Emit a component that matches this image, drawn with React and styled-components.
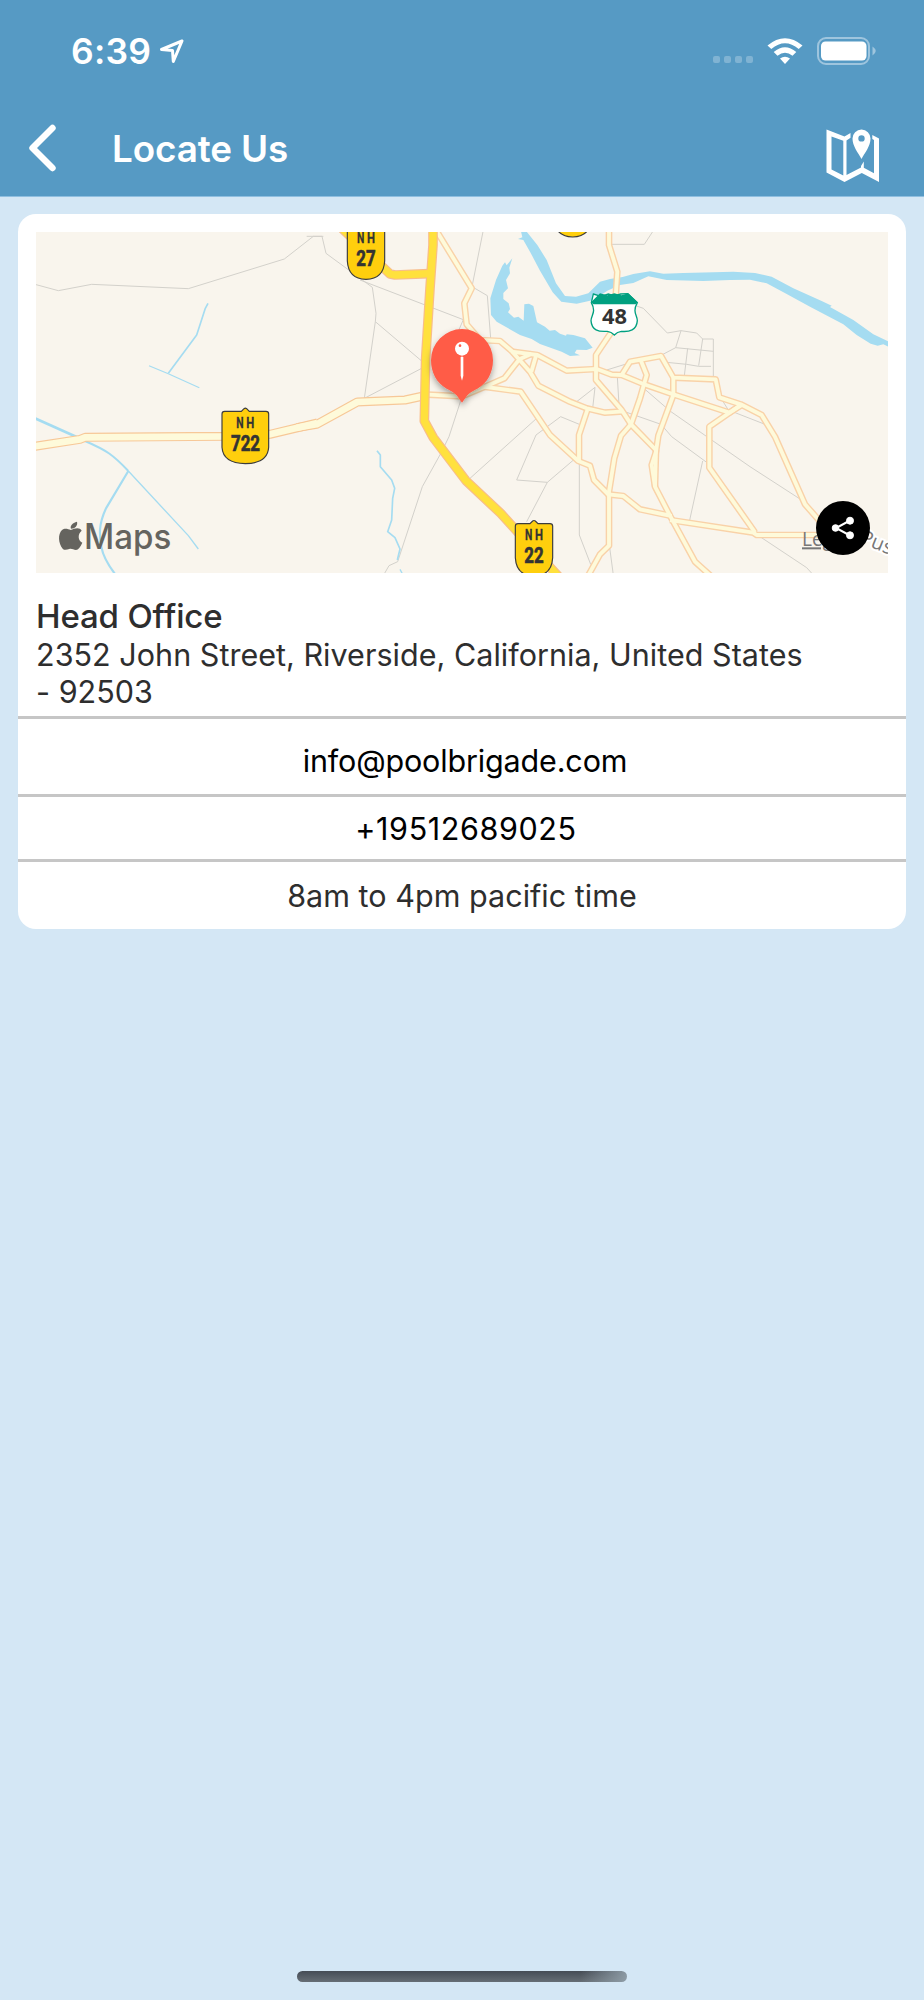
import React from 'react';
import styled, { createGlobalStyle } from 'styled-components';

const GlobalStyle = createGlobalStyle`
  * {
    box-sizing: border-box;
  }

  body {
    margin: 0;
    background: #d4e7f5;
    font-family: Inter, "Liberation Sans", sans-serif;
  }
`;

const Screen = styled.div`
  display: flex;
  flex-direction: column;
  width: 924px;
  height: 2000px;
  background: #d4e7f5;
`;

const Header = styled.header`
  height: 197px;
  background: #569ac4;
  border-bottom: 1px solid #8fbfe0;
  color: #fff;
`;

const StatusBar = styled.div`
  display: flex;
  align-items: center;
  height: 100px;
  padding: 2px 48px 0 71px;
`;

const Time = styled.span`
  font-size: 35.5px;
  font-weight: 600;
  letter-spacing: 0.2px;
  width: 88px;
`;

const StatusIcons = styled.div`
  display: flex;
  align-items: center;
  margin-left: auto;
`;

const Signal = styled.div`
  display: flex;
  gap: 4px;
  margin: 17px 14px 0 0;

  i {
    width: 7px;
    height: 7px;
    border-radius: 2px;
    background: rgba(255, 255, 255, 0.25);
  }
`;

const BatteryIcon = styled.svg`
  margin-left: 14px;
`;

const NavBar = styled.div`
  display: flex;
  align-items: center;
  height: 96px;
  padding: 0 44px 0 28px;
`;

const BackButton = styled.button`
  display: flex;
  width: 84px;
  padding: 0;
  border: none;
  background: none;
  cursor: pointer;
`;

const Title = styled.h1`
  margin: 1px 0 0;
  font-size: 36.8px;
  font-weight: 600;
  letter-spacing: -0.1px;
`;

const MapButton = styled(BackButton)`
  width: 54px;
  margin: 14px 0 0 auto;
`;

const Card = styled.section`
  margin: 17px 18px 0;
  background: #fff;
  border-radius: 18px;
  overflow: hidden;
`;

const MapBox = styled.div`
  position: relative;
  height: 341px;
  margin: 18px 18px 0;
  overflow: hidden;

  > svg {
    display: block;
  }
`;

const ShareButton = styled.button`
  position: absolute;
  right: 18px;
  bottom: 18px;
  display: flex;
  align-items: center;
  justify-content: center;
  width: 54px;
  height: 54px;
  padding: 0;
  border: none;
  border-radius: 50%;
  background: #000;
  cursor: pointer;
`;

const Office = styled.div`
  height: 143.4px;
  padding: 24px 18px 0;
  color: #2e2e2e;
`;

const OfficeName = styled.h2`
  margin: 0;
  font-size: 33px;
  line-height: 38.5px;
  font-weight: 500;
  letter-spacing: -0.15px;
`;

const Address = styled.p`
  margin: 0;
  font-size: 30.5px;
  line-height: 37.4px;
  letter-spacing: 0.03px;
`;

const Row = styled.div`
  display: flex;
  align-items: center;
  justify-content: center;
  height: ${(p) => p.$height}px;
  padding-top: ${(p) => p.$top || 0}px;
  padding-left: ${(p) => p.$left || 0}px;
  border-top: 3px solid #c6c6c6;
  font-size: 30.5px;
  letter-spacing: ${(p) => p.$spacing || 0}px;
  color: ${(p) => (p.$muted ? '#2e2e2e' : '#000')};
`;

const HomeIndicator = styled.div`
  width: 330px;
  height: 11px;
  margin: auto auto 18px 297px;
  border-radius: 6px;
  background: linear-gradient(90deg, rgba(212, 231, 245, 0) 86%, rgba(150, 165, 175, 0.85) 100%),
    linear-gradient(#454c55, #666e75);
`;

// The map is drawn in three sections, each shifted to its own origin
const SECTIONS = [
  {
    x: -18,
    paths: [
      'M0 174 L85 197 L185 178 L475 191 L763 102 L850 34 H880',
    ],
    trunk: ['M0 666 L150 643 L165 637 L590 634 L720 628 L862 594'],
    local: [],
    streams: [
      ['M534 235 L526 250 L500 330 L415 445', 5],
      ['M357 422 L415 446 L508 488', 3.5],
      ['M15 580 L140 636', 8],
      ['M165 648 C230 676 250 690 295 738', 6],
      ['M295 738 L475 932 L505 972', 4],
      ['M295 738 L228 850 C205 900 208 930 214 965 C220 1000 238 1025 256 1048', 6.5],
    ],
  },
  {
    x: 822,
    paths: [
      'M-10 34 H36 L48 85 L187 187 L198 265 L196 290 L163 520 L335 430',
      'M150 165 L460 284 L440 330',
      'M196 290 L335 408',
      'M519 20 L486 185 L532 212 L542 340',
      'M456 515 L417 635 L393 684 L337 785 L263 1010 L237 1022 L222 1048',
      'M480 760 L680 580',
      'M808 690 L712 772 L620 765 L678 630 L752 575 L808 598',
      'M712 772 L650 890',
      'M808 700 V930 L842 1018',
      'M800 530 L855 487 L848 550',
    ],
    trunk: ['M-40 608 L20 598 L142 531 L285 525 L340 513'],
    local: [
      'M375 10 L485 190 L463 235 L470 298 L510 345 L570 348 L605 378 L660 440 L685 482 L780 530 L830 550 L885 563 L940 559',
      'M605 380 L682 390 L770 437 L860 432',
      'M340 508 L456 514 L530 483 L583 460 L628 403 L665 386',
      'M678 392 L664 440',
      'M520 485 L632 500 L720 630 L805 708 L840 722 L852 765 L895 808',
      'M832 555 L807 630 L807 708',
    ],
    streams: [
      ['M201 677 L211 690 V725 L245 765 L254 790 L248 820 L245 885 L233 920 L255 938 L270 972 L262 1005', 5],
      ['M270 1033 L278 1048', 4],
    ],
  },
  {
    x: 1692,
    paths: [
      'M30 58 H133 L158 20',
      'M110 243 L130 250 L202 324 L243 317 L290 324 L308 342 H340 V455',
      'M243 317 L227 368 L185 390',
      'M227 368 L340 379',
      'M308 342 L296 422',
      'M263 370 L253 452',
      'M200 412 L260 418 L296 424 H333',
      'M20 435 L75 418',
      'M52 455 L57 540',
      'M120 480 L210 558 L450 725 L600 822',
      'M80 562 L183 598 L215 635 L320 712',
      'M308 708 L268 890',
      'M360 515 L385 555 L495 598',
      'M480 935 L620 1028 L640 1050',
      'M28 960 L40 1050',
    ],
    trunk: [],
    local: [
      'M27 0 V60 L52 140 L46 230',
      'M35 320 L0 372 L-12 390 V465 L65 555 L93 598 L168 675',
      'M-10 432 L35 449 L65 450 L130 477 L220 508 L388 563 L425 540',
      'M65 450 L90 410 L183 393 L220 458 L347 463 L358 517 L422 538 L485 570 L525 635 L615 838 L665 895',
      'M122 405 L140 450 L120 520 L93 598 L63 632 L43 700 L27 800 V962 L0 988 L-40 1060',
      'M220 458 V510 L175 632 L168 680 L155 720 L165 785 L210 872 L285 1010 L335 1055',
      'M168 675 L165 785',
      'M-18 765 L25 808 L70 813 L120 853 L215 873',
      'M210 885 L460 923 L470 930 H700',
      'M425 538 L328 605 V728 L465 922',
    ],
    streams: [],
  },
];

const HIGHWAYS = [
  'M80 -5 L240 147 L255 150 L357 146',
  'M369 0 V60 L360 190 L347 400 L343 588 L370 638 L468 767 L572 865 L640 940 L760 1070',
];

function Roads({ kind, stroke, width }) {
  return SECTIONS.map((s) => (
    <g key={s.x} transform={`translate(${s.x} -21)`} stroke={stroke} strokeWidth={width}>
      {s[kind].map((d) => <path key={d} d={d} />)}
    </g>
  ));
}

// Yellow national highway sign, x is the centre and y the top edge
function Shield({ x, y, number, wide }) {
  const w = wide ? 70 : 56;
  return (
    <g transform={`translate(${x} ${y})`}>
      <path
        d={`M${-w + 8} 10 H-12 L-4 2 Q0 -1 4 2 L12 10 H${w - 8} Q${w} 10 ${w} 18 V${wide ? 118 : 112} Q${w - 3} 166 0 167 Q${-w + 3} 166 ${-w} ${wide ? 118 : 112} V18 Q${-w} 10 ${-w + 8} 10 Z`}
        fill="#ffcf0d"
        stroke="#3c3c3c"
        strokeWidth="3.5"
      />
      {number && (
        <g fill="#333" stroke="#333" fontFamily="Roboto, sans-serif" fontWeight="700">
          <text x="-27" y="59" fontSize="46" strokeWidth="0.8" textLength="22" lengthAdjust="spacingAndGlyphs">N</text>
          <text x="3" y="59" fontSize="46" strokeWidth="0.8" textLength="24" lengthAdjust="spacingAndGlyphs">H</text>
          <text x={wide ? -43 : -29} y="128" fontSize="65" strokeWidth="2" textLength={wide ? 87 : 58} lengthAdjust="spacingAndGlyphs">
            {number}
          </text>
        </g>
      )}
    </g>
  );
}

function OfficeMap() {
  return (
    <svg width="852" height="341" viewBox="0 0 2556 1023">
      <defs>
        <filter id="pinShadow" x="-30%" y="-30%" width="160%" height="160%">
          <feDropShadow dx="0" dy="10" stdDeviation="9" floodOpacity="0.35" />
        </filter>
      </defs>
      <rect width="2556" height="1023" fill="#f9f5ed" />

      <g fill="none" strokeLinejoin="round">
        <Roads kind="paths" stroke="#d3d1cb" width="3" />
        {SECTIONS.map((s) => (
          <g key={s.x} transform={`translate(${s.x} -21)`} stroke="#a5dcf1">
            {s.streams.map(([d, w]) => <path key={d} d={d} strokeWidth={w} />)}
          </g>
        ))}
      </g>

      {/* rivers and lake */}
      <g transform="translate(822 -21)" fill="#a5dcf1">
        <path d="M632 15 L650 20 L682 60 L710 105 L738 175 L765 213 L798 215 L835 205 L870 170 L900 162 L938 156 L970 147 L1020 139 L1060 146 L1120 144 L1270 140 L1335 144 L1385 155 L1450 190 L1535 228 L1565 242 L1560 246 L1630 285 L1690 328 L1740 352 V367 L1720 358 L1703 362 L1682 356 L1640 330 L1600 298 L1500 245 L1430 207 L1370 175 L1320 164 L1260 165 L1180 168 L1070 165 L1037 158 L1015 154 L970 174 L930 180 L892 197 L850 225 L800 236 L754 230 L728 202 L690 137 L660 80 L640 45 L624 42 L637 37 Z" />
        <path d="M607 100 L598 128 L600 145 L588 165 L594 190 L580 204 L580 222 L596 235 L600 252 L594 262 L612 278 L625 275 L641 287 L643 238 L657 236 L670 243 L681 292 L705 305 L719 317 L735 315 L750 326 L768 332 L770 328 L790 330 L825 340 L848 368 L830 375 L800 374 L794 384 L810 391 L780 393 L755 380 L690 357 L665 342 L630 330 L560 290 L543 270 L541 220 L558 165 L577 122 L585 112 L590 121 Z" />
      </g>

      <g fill="none" strokeLinejoin="round">
        <Roads kind="local" stroke="#f9d2a8" width="20" />
        <Roads kind="trunk" stroke="#f7c898" width="27" />
        <Roads kind="local" stroke="#fefada" width="11.5" />
        <Roads kind="trunk" stroke="#fefada" width="20" />
        <g transform="translate(822 -21)">
          {HIGHWAYS.map((d) => <path key={d} d={d} stroke="#f8bd8a" strokeWidth="29" />)}
          {HIGHWAYS.map((d) => <path key={d} d={d} stroke="#ffe13d" strokeWidth="22" />)}
        </g>
      </g>

      <Shield x={628} y={528} number="722" wide />
      <Shield x={990} y={-25} number="27" />
      <Shield x={1494} y={865} number="22" />
      <Shield x={1610} y={-152} />

      <g transform="translate(1692 -21)">
        <path d="M-20 207 L3 214 L25 207 L43 213 L62 207 L83 206 L112 233 C96 262 112 270 112 287 C110 316 88 321 64 319 Q52 320 43 330 Q34 320 22 319 C-5 321 -25 316 -27 287 C-27 270 -10 262 -26 233 L-20 207 Z" fill="#fff" stroke="#00a080" strokeWidth="4" />
        <path d="M0 205 L22 211 L43 205 L64 211 L85 205 L113 232 L107 238 H-20 L-27 232 Z" fill="#00a080" />
        <text x="6" y="298" fontFamily="Open Sans, sans-serif" fontWeight="700" fontSize="65" textLength="75" lengthAdjust="spacingAndGlyphs" fill="#333">48</text>
      </g>

      <g fill="#777" fontFamily="Open Sans, sans-serif" fontSize="60" transform="translate(1692 -21)">
        <text x="606" y="964" textDecoration="underline" textLength="140" lengthAdjust="spacingAndGlyphs">Legal</text>
        <text x="0" y="0" transform="translate(776 952) rotate(22)" stroke="#fff" strokeWidth="12" paintOrder="stroke">Pus</text>
      </g>

      {/* Apple Maps mark */}
      <g transform="translate(-18 -21)" fill="#65645f">
        <path d="M123 911 C119 903 127 893 141 890 C144 901 135 911 123 911 Z" />
        <path d="M122 915 C133 910 149 905 155 917 C142 928 144 946 157 953 C151 967 145 974 138 975 C130 975 126 970 118 972 C109 975 103 976 98 971 C85 954 83 928 96 915 C104 908 114 912 122 915 Z" />
        <text x="162" y="973" fontFamily="Inter, sans-serif" fontSize="105" fontWeight="500" textLength="262" lengthAdjust="spacingAndGlyphs">Maps</text>
      </g>

      {/* pin */}
      <g transform="translate(822 -21)">
        <path d="M456 533 L441 512 C432 502 428 501 410 491 C380 475 363 442 363 406 A93 94 0 0 1 549 406 C549 442 532 475 502 491 C484 501 480 502 471 512 Z" fill="#ff5c47" filter="url(#pinShadow)" />
        <circle cx="456" cy="371" r="21" fill="#fff" />
        <circle cx="450" cy="362" r="4" fill="#ff5c47" />
        <path d="M452 396 Q456 393 460 396 V452 L456 467 L452 452 Z" fill="#fff" />
      </g>
    </svg>
  );
}

export default function App() {
  return (
    <>
      <GlobalStyle />
      <Screen>
        <Header>
          <StatusBar>
            <Time>6:39</Time>
            <svg width="26" height="26" viewBox="0 0 26 26" fill="none" stroke="#fff" strokeWidth="3" strokeLinejoin="round">
              <path d="M23 3 L2.5 11.5 L13.5 12.5 L14.3 23.5 Z" />
            </svg>
            <StatusIcons>
              <Signal><i /><i /><i /><i /></Signal>
              <svg width="36" height="27" viewBox="0 0 36 27" fill="#fff">
                <path d="M.5 7.5 Q18 -7 35.5 7.5 L31.7 11 Q18 -.5 4.3 11 Z" />
                <path d="M6.7 14 Q18 4.5 29.3 14 L25.5 17.8 Q18 11.5 10.5 17.8 Z" />
                <path d="M13 20.5 Q18 16.8 23 20.5 L18 26 Z" />
              </svg>
              <BatteryIcon width="59" height="28" viewBox="0 0 59 28">
                <rect x="1" y="1" width="51" height="26" rx="8" fill="none" stroke="#9ec5de" strokeWidth="2" />
                <rect x="4" y="4.5" width="45.5" height="19" rx="4.5" fill="#fff" />
                <path d="M55.5 9.5 Q62 14 55.5 18.5 Z" fill="#9ec5de" />
              </BatteryIcon>
            </StatusIcons>
          </StatusBar>
          <NavBar>
            <BackButton aria-label="Back">
              <svg width="30" height="48" viewBox="0 0 30 48" fill="none" stroke="#fff" strokeWidth="6.4" strokeLinecap="round" strokeLinejoin="round">
                <path d="M24.5 4 L4.5 24 L24.5 44" />
              </svg>
            </BackButton>
            <Title>Locate Us</Title>
            <MapButton aria-label="Map">
              <svg width="54" height="54" viewBox="0 0 54 54" fill="#fff">
                <path fillRule="evenodd" d="M.5 1.5 L18.5 8.5 L24.5 5 V9.7 L20.5 12.5 V47 L35 39.5 V38 L37.8 33.5 V39.7 L48 45.2 V12 L46.3 11 V7 L53 10.5 V54 L35.8 45 L18.5 54 L.5 44.5 Z M5.5 8.5 V41.5 L17.3 47.5 V12.8 Z" />
                <path fillRule="evenodd" d="M35.5 1.5 A9 9 0 0 0 26.5 10.5 C26.5 18 32 24.5 35.5 31 C39 24.5 44.5 18 44.5 10.5 A9 9 0 0 0 35.5 1.5 Z M35.5 7.2 A3.2 3.2 0 1 1 35.5 13.6 A3.2 3.2 0 1 1 35.5 7.2 Z" />
              </svg>
            </MapButton>
          </NavBar>
        </Header>

        <Card>
          <MapBox>
            <OfficeMap />
            <ShareButton aria-label="Share">
              <svg width="24" height="24" viewBox="0 0 24 24" fill="#fff" stroke="#fff">
                <path d="M19 4.5 L5 12 L19 19.5" fill="none" strokeWidth="2" />
                <circle cx="19" cy="4.7" r="3.5" />
                <circle cx="4.5" cy="12" r="3.3" />
                <circle cx="19" cy="19.3" r="3.5" />
              </svg>
            </ShareButton>
          </MapBox>
          <Office>
            <OfficeName>Head Office</OfficeName>
            <Address>
              2352 John Street, Riverside, California, United States
              <br />- 92503
            </Address>
          </Office>
          <Row $height={78} $top={8} $left={6} $spacing={-0.15}>info@poolbrigade.com</Row>
          <Row $height={65} $left={8} $spacing={0.6}>+19512689025</Row>
          <Row $height={69.6} $spacing={0.03} $muted>8am to 4pm pacific time</Row>
        </Card>

        <HomeIndicator />
      </Screen>
    </>
  );
}
